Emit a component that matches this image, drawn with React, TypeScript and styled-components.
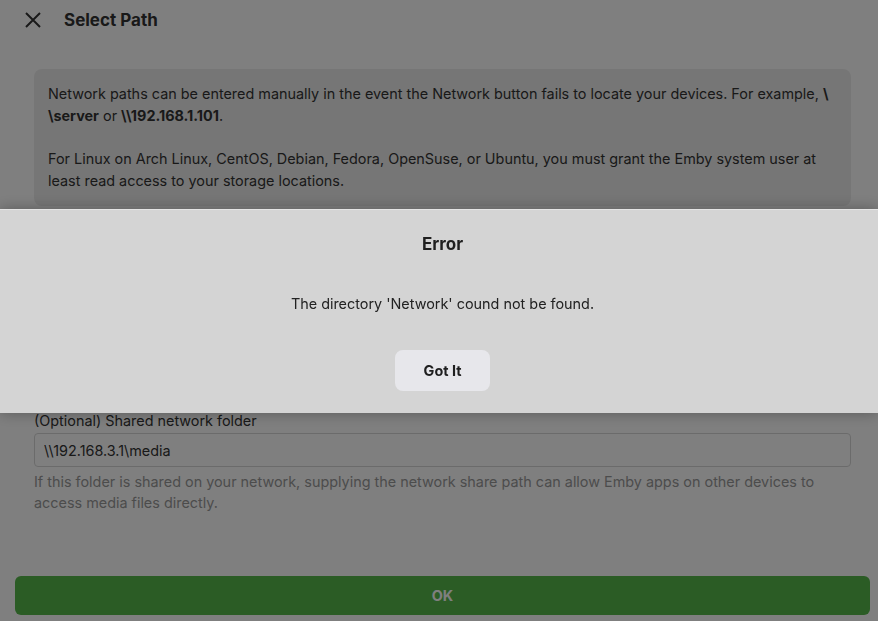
import * as React from "react";
import styled, { createGlobalStyle } from "styled-components";

const App: React.FC = () => {
  return (
    <>
      <GlobalStyle />
      <Page>
        <Header>
          <CloseButton aria-label="Close">
            <svg width="18" height="18" viewBox="0 0 18 18" fill="none">
              <path d="M2 2L16 16M16 2L2 16" stroke="#333" strokeWidth="2" />
            </svg>
          </CloseButton>
          <Title>Select Path</Title>
        </Header>

        <Content>
          <InfoBox>
            <p>
              Network paths can be entered manually in the event the Network button fails to locate
              your devices. For example, <b>{"\\"}<wbr />{"\\server"}</b> or{" "}
              <b>{"\\\\192.168.1.101"}</b>.
            </p>
            <p>
              For Linux on Arch Linux, CentOS, Debian, Fedora, OpenSuse, or Ubuntu, you must grant the
              Emby system user at least read access to your storage locations.
            </p>
          </InfoBox>

          <Field>
            <Label>Folder</Label>
            <Input value="Network" readOnly />
          </Field>

          <Field $gap={127}>
            <Label>(Optional) Shared network folder</Label>
            <Input value={"\\\\192.168.3.1\\media"} readOnly />
            <Help>
              If this folder is shared on your network, supplying the network share path can allow
              Emby apps on other devices to access media files directly.
            </Help>
          </Field>
        </Content>

        <Footer>
          <OkButton>OK</OkButton>
        </Footer>
      </Page>

      <Overlay>
        <Dialog role="alertdialog">
          <DialogTitle>Error</DialogTitle>
          <DialogText>The directory 'Network' cound not be found.</DialogText>
          <DialogButton>Got It</DialogButton>
        </Dialog>
      </Overlay>
    </>
  );
};

export default App;

/* Styles */
const GlobalStyle = createGlobalStyle`
  html, body {
    margin: 0;
    padding: 0;
    background: #ffffff;
    font-family: Inter, "Noto Sans", sans-serif;
    color: #333333;
  }
  * {
    box-sizing: border-box;
  }
`;

const Page = styled.div`
  height: 621px;
  display: flex;
  flex-direction: column;
  overflow: hidden;
`;

const Header = styled.header`
  height: 40px;
  display: flex;
  align-items: center;
  padding-left: 24px;
  gap: 22px;
`;

const CloseButton = styled.button`
  width: 18px;
  height: 18px;
  padding: 0;
  border: 0;
  background: none;
  display: flex;
  align-items: center;
  justify-content: center;
`;

const Title = styled.h1`
  margin: 0;
  font-size: 17px;
  font-weight: 700;
  color: #333333;
`;

const Content = styled.main`
  flex: 1;
  padding: 29px 27px 0 34px;
  display: flex;
  flex-direction: column;
`;

const InfoBox = styled.div`
  background: #ededed;
  border-radius: 8px;
  padding: 14px 14px 14px;
  font-size: 14.4px;
  line-height: 22px;
  color: #333333;

  p {
    margin: 0;
  }
  p + p {
    margin-top: 21px;
  }
  b {
    font-weight: 700;
  }
`;

const Field = styled.div<{ $gap?: number }>`
  display: flex;
  flex-direction: column;
  margin-top: ${(p) => p.$gap ?? 20}px;
`;

const Label = styled.label`
  font-size: 14.4px;
  line-height: 22px;
  color: #333333;
`;

const Input = styled.input`
  height: 34px;
  margin-top: 1px;
  padding: 0 9px;
  border: 1px solid #d6d6d6;
  border-radius: 4px;
  background: #ffffff;
  font-family: Inter, "Noto Sans", sans-serif;
  font-size: 14.4px;
  color: #333333;
  outline: none;
`;

const Help = styled.div`
  margin-top: 4px;
  font-size: 14.4px;
  line-height: 21px;
  color: #999999;
`;

const Footer = styled.footer`
  padding: 0 8px 6px 15px;
`;

const OkButton = styled.button`
  width: 100%;
  height: 39px;
  border: 0;
  border-radius: 6px;
  background: #56b84a;
  color: #ffffff;
  font-family: Inter, "Noto Sans", sans-serif;
  font-size: 14.4px;
  font-weight: 700;
`;

const Overlay = styled.div`
  position: fixed;
  inset: 0;
  background: rgba(0, 0, 0, 0.5);
  display: flex;
  align-items: center;
`;

const Dialog = styled.div`
  width: 100%;
  height: 204px;
  background: #d4d4d4;
  border-top: 1px solid #e4e4e4;
  box-shadow: 0 0 14px rgba(0, 0, 0, 0.3);
  display: flex;
  flex-direction: column;
  align-items: center;
  padding: 23px 0 0 7px;
`;

const DialogTitle = styled.h2`
  margin: 0;
  font-size: 17px;
  line-height: 22px;
  font-weight: 700;
  color: #1f1f1f;
`;

const DialogText = styled.p`
  margin: 38px 0 0;
  font-size: 14.4px;
  line-height: 22px;
  color: #222222;
`;

const DialogButton = styled.button`
  margin-top: 35px;
  width: 95px;
  height: 41px;
  border: 0;
  border-radius: 8px;
  background: #e7e7eb;
  color: #1f1f1f;
  font-family: Inter, "Noto Sans", sans-serif;
  font-size: 14.4px;
  font-weight: 700;
`;
